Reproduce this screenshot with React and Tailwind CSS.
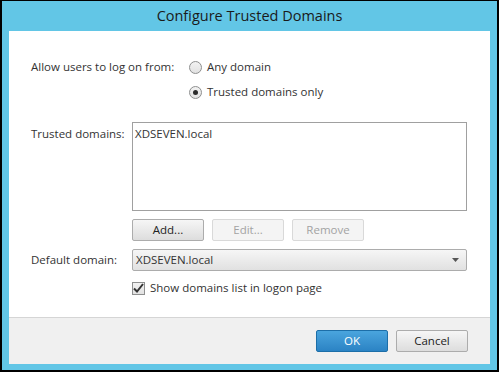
import React from 'react';

const font = { fontFamily: '"Segoe UI", "Open Sans", "Noto Sans", sans-serif' };

function Radio({ checked, label }) {
  return (
    <label className="flex items-center h-[18px] gap-[5px]">
      <span className="w-[13px] h-[13px] rounded-full border border-[#8e8f8f] bg-gradient-to-b from-[#f2f2f2] to-[#e2e2e2] flex items-center justify-center">
        {checked && <span className="w-[5px] h-[5px] rounded-full bg-[#2b2b2b]" />}
      </span>
      <span>{label}</span>
    </label>
  );
}

function Button({ children, disabled, primary }) {
  let cls = 'border-[#acacac] bg-gradient-to-b from-[#f6f6f6] to-[#dddddd] text-[#222]';
  if (disabled) cls = 'border-[#d9d9d9] bg-[#f4f4f4] text-[#a3a3a3]';
  if (primary) cls = 'border-[#1c6ea8] bg-gradient-to-b from-[#4aa5de] to-[#2b83c4] text-white';
  return (
    <button className={`w-[72px] h-[22px] border rounded-[2px] flex items-center justify-center text-[11.5px] ${cls}`}>
      {children}
    </button>
  );
}

export default function App() {
  return (
    <div style={font} className="w-[499px] h-[372px] bg-black pt-[1px] pb-[2px] px-[2px] text-[11.5px] text-[#333]">
      <div className="h-full bg-[#62c6e6] px-[7px] pb-[6px] flex flex-col">
        <div className="h-[30px] flex items-center justify-center text-[14.5px] text-[#1a1a1a] pb-[1px]">
          Configure Trusted Domains
        </div>
        <div className="flex-1 bg-white flex flex-col">
          <div className="h-[286px] pl-[22px] pr-[23px] pt-[27px] grid grid-cols-[101px_1fr] content-start leading-[16px]">
            <div className="h-[18px] flex items-center whitespace-nowrap">Allow users to log on from:</div>
            <div className="pl-[57px]"><Radio label="Any domain" /></div>

            <div />
            <div className="pl-[57px] mt-[7px]"><Radio checked label="Trusted domains only" /></div>

            <div className="mt-[25px] whitespace-nowrap">Trusted domains:</div>
            <div className="mt-[21px] h-[89px] border border-[#a0a0a0] pt-[3px] px-[2px]">XDSEVEN.local</div>

            <div />
            <div className="mt-[8px] flex gap-[8px]">
              <Button>Add...</Button>
              <Button disabled>Edit...</Button>
              <Button disabled>Remove</Button>
            </div>

            <div className="mt-[8px] h-[22px] flex items-center whitespace-nowrap">Default domain:</div>
            <div className="mt-[8px] h-[22px] border border-[#acacac] rounded-[2px] bg-gradient-to-b from-[#f6f6f6] to-[#e1e1e1] flex items-center pl-[3px] pr-[7px]">
              <span className="flex-1">XDSEVEN.local</span>
              <svg width="7" height="4" viewBox="0 0 7 4"><path d="M0 0h7L3.5 4z" fill="#555" /></svg>
            </div>

            <div />
            <div className="mt-[8px] h-[18px] flex items-center gap-[5px]">
              <span className="w-[13px] h-[13px] border border-[#8e8f8f] bg-gradient-to-b from-[#f2f2f2] to-[#e2e2e2] flex items-center justify-center">
                <svg width="11" height="10" viewBox="0 0 11 10"><path d="M1 5.5l3 3L10 1" fill="none" stroke="#333" strokeWidth="2" /></svg>
              </span>
              <span>Show domains list in logon page</span>
            </div>
          </div>
          <div className="flex-1 border-t border-[#d5d5d5] bg-[#f0f0f0] pt-[12px] pr-[22px] flex justify-end gap-[8px]">
            <Button primary>OK</Button>
            <Button>Cancel</Button>
          </div>
        </div>
      </div>
    </div>
  );
}
